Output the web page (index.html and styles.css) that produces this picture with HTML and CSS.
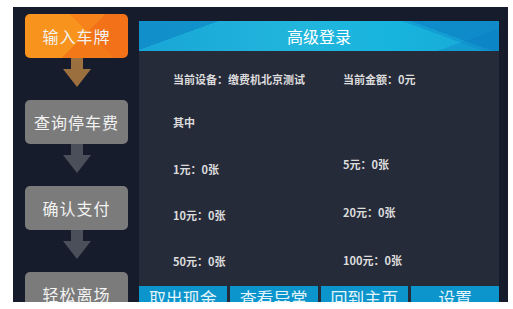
FILE: index.html
```html
<!DOCTYPE html>
<html lang="zh-CN">
<head>
  <meta charset="UTF-8">
  <title>高级登录</title>
  <link rel="stylesheet" href="styles.css">
</head>
<body>

<div class="screen">
  <div class="steps">
    <div class="step active">输入车牌</div>
    <div class="step-arrow">
      <svg width="28" height="29" viewBox="0 0 28 29"><polygon points="8,0 20,0 20,11 28,11 14,29 0,11 8,11" fill="#9b6f3e"/></svg>
    </div>
    <div class="step">查询停车费</div>
    <div class="step-arrow">
      <svg width="28" height="29" viewBox="0 0 28 29"><polygon points="8,0 20,0 20,11 28,11 14,29 0,11 8,11" fill="#4a4f5a"/></svg>
    </div>
    <div class="step">确认支付</div>
    <div class="step-arrow">
      <svg width="28" height="29" viewBox="0 0 28 29"><polygon points="8,0 20,0 20,11 28,11 14,29 0,11 8,11" fill="#4a4f5a"/></svg>
    </div>
    <div class="step">轻松离场</div>
  </div>

  <div class="panel">
    <div class="panel-title">高级登录</div>
    <div class="panel-body">
      <div class="info">
        <span>当前设备：缴费机北京测试</span>
        <span>当前金额：0元</span>

        <span>其中</span>
        <span></span>

        <span>1元：0张</span>
        <span class="lift-lg">5元：0张</span>

        <span>10元：0张</span>
        <span class="lift-sm">20元：0张</span>

        <span>50元：0张</span>
        <span class="lift-xs">100元：0张</span>
      </div>
    </div>
    <div class="actions">
      <button>取出现金</button>
      <button>查看异常</button>
      <button>回到主页</button>
      <button>设置</button>
    </div>
  </div>
</div>

</body>
</html>
```

FILE: styles.css
```css
* {margin:0;padding:0;box-sizing:border-box;}
body {
  background: #fff;
  font-family: "Noto Sans CJK SC", "Noto Sans", sans-serif;
}
.screen {
  margin: 7px 0 0 13px;
  width: 495px;
  height: 295px;
  background: #161c2c;
  display: flex;
  overflow: hidden;
}

.steps {
  width: 126px;
  padding: 7px 0 0 12px;
  display: flex;
  flex-direction: column;
}
.step {
  width: 103px;
  height: 44px;
  flex-shrink: 0;
  border-radius: 5px;
  background: #7b7b7b;
  color: #f2f2f2;
  font-size: 16px;
  letter-spacing: 1px;
  display: flex;
  justify-content: center;
  align-items: center;
}
.step.active {
  background:
    linear-gradient(135deg, transparent 55%, rgba(240,100,20,.55) 55%),
    linear-gradient(45deg, transparent 60%, rgba(245,110,25,.45) 60%),
    #f8931e;
}
.step-arrow {
  height: 42px;
  width: 103px;
  flex-shrink: 0;
  display: flex;
  justify-content: center;
}

.panel {
  margin-top: 14px;
  width: 360px;
  height: 281px;
  background: #262b3a;
  display: flex;
  flex-direction: column;
}
.panel-title {
  height: 30px;
  flex-shrink: 0;
  color: #fff;
  font-size: 16px;
  line-height: 30px;
  text-align: center;
  background:
    linear-gradient(160deg, rgba(8,120,190,.5) 0, rgba(8,120,190,.5) 18%, transparent 18%),
    linear-gradient(20deg, transparent 80%, rgba(8,120,190,.45) 80%),
    linear-gradient(200deg, rgba(10,130,200,.4) 0, rgba(10,130,200,.4) 22%, transparent 22%),
    linear-gradient(340deg, rgba(10,125,195,.35) 0, rgba(10,125,195,.35) 14%, transparent 14%),
    linear-gradient(90deg, #18a6d6, #22b6dc 45%, #16b4de 70%, #1aa9d6);
}
.panel-body {
  flex: 1;
  padding: 18px 0 0 34px;
}
.info {
  display: grid;
  grid-template-columns: 170px 150px;
  grid-template-rows: 20px 43px 47px 46px 46px;
  color: #dcdcdc;
  font-size: 11px;
  font-weight: bold;
  line-height: 20px;
}
.info span {
  align-self: end;
}
.info .lift-lg {
  margin-bottom: 5px;
}
.info .lift-sm {
  margin-bottom: 3px;
}
.info .lift-xs {
  margin-bottom: 1px;
}

.actions {
  height: 16px;
  flex-shrink: 0;
  display: flex;
  gap: 3px;
  overflow: hidden;
}
.actions button {
  flex: 1;
  height: 16px;
  border: none;
  background: #0b95cc;
  color: #e3f4fb;
  font-family: inherit;
  font-size: 17px;
  line-height: 20px;
  padding-top: 2px;
  overflow: hidden;
  display: flex;
  justify-content: center;
  align-items: flex-start;
}
```
